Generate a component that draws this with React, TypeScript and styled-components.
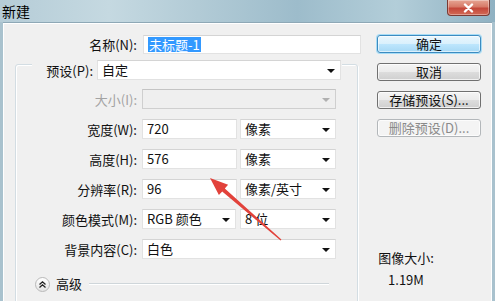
import React from "react";
import styled, { createGlobalStyle } from "styled-components";

const Global = createGlobalStyle`
  html, body { margin: 0; padding: 0; background: #ffffff; }
  body { font-family: "Noto Sans CJK SC", "Noto Sans", sans-serif; }
  * { box-sizing: border-box; }
`;

const FONT = `"Noto Sans CJK SC", "Noto Sans", sans-serif`;

const Window = styled.div`
  position: relative;
  width: 495px;
  height: 301px;
  overflow: hidden;
  display: flex;
  flex-direction: column;
  background: #a9c2ce;
  font-family: ${FONT};
  font-size: 13px;
  color: #111;
`;

const TitleBar = styled.div`
  height: 22px;
  flex: none;
  display: flex;
  align-items: flex-start;
  justify-content: space-between;
  padding: 0 5px 0 2px;
  background: linear-gradient(
    to right,
    #b5ccd7 0%,
    #c5d9e1 22%,
    #b2cbd6 40%,
    #9dbccb 60%,
    #b3ced9 80%,
    #8fb1c2 100%
  );
`;

const Title = styled.span`
  font-size: 14px;
  line-height: 22px;
  color: #000;
`;

const CloseButton = styled.div`
  width: 43px;
  height: 16px;
  display: flex;
  align-items: center;
  justify-content: center;
  border: 1px solid #7a3a33;
  border-top: none;
  border-radius: 0 0 4px 4px;
  background: linear-gradient(#e6a594 0%, #d77a68 45%, #c4473a 55%, #d26a55 100%);
  box-shadow: inset 0 0 0 1px rgba(255, 255, 255, 0.35);
`;

const Body = styled.div`
  flex: 1;
  display: flex;
  margin: 0 3px;
  background: #f0f0f0;
  border-top: 1px solid #8ea8b6;
  box-shadow: inset 1px 1px 0 #ffffff, inset -1px 0 0 #ffffff;
`;

const Main = styled.div`
  width: 362px;
  flex: none;
  display: flex;
  flex-direction: column;
`;

const NameRow = styled.div`
  margin-top: 12px;
  height: 19px;
  display: flex;
  align-items: center;
`;

const Label = styled.span<{ $w: number; $gap: number; $disabled?: boolean }>`
  width: ${(p) => p.$w}px;
  margin-right: ${(p) => p.$gap}px;
  flex: none;
  text-align: right;
  font-size: 13px;
  line-height: 19px;
  white-space: nowrap;
  color: ${(p) => (p.$disabled ? "#a3a3a3" : "#111")};
`;

const Field = styled.div<{ $w: number; $h?: number; $disabled?: boolean }>`
  width: ${(p) => p.$w}px;
  height: ${(p) => p.$h ?? 20}px;
  flex: none;
  display: flex;
  align-items: center;
  justify-content: space-between;
  padding: 0 5px 0 4px;
  background: ${(p) => (p.$disabled ? "#efefef" : "#ffffff")};
  border: 1px solid ${(p) => (p.$disabled ? "#cfcfcf" : "#e2e2e2")};
  border-top-color: ${(p) => (p.$disabled ? "#c4c4c4" : "#d4d4d4")};
  font-size: 13px;
  line-height: 18px;
  color: #111;
  white-space: nowrap;
`;

const Selected = styled.span`
  background: #3399ff;
  color: #ffffff;
  padding: 0 1px;
  line-height: 15px;
`;

const Caret = styled.span<{ $disabled?: boolean }>`
  width: 0;
  height: 0;
  border-left: 4px solid transparent;
  border-right: 4px solid transparent;
  border-top: 4px solid ${(p) => (p.$disabled ? "#b0b0b0" : "#111")};
  margin-top: 1px;
`;

const GroupBox = styled.div`
  margin: 10px 0 0 12px;
  width: 343px;
  height: 280px;
  flex: none;
  border: 1px solid #d3dde3;
  border-radius: 3px;
  box-shadow: inset 1px 1px 0 #ffffff, 1px 1px 0 #ffffff;
  display: flex;
  flex-direction: column;
`;

const PresetRow = styled.div`
  margin: -5px 0 0 16px;
  width: 310px;
  height: 20px;
  display: flex;
  align-items: center;
  background: #f0f0f0;
`;

const Rows = styled.div`
  margin-top: 9px;
  display: grid;
  grid-auto-rows: 20px;
  row-gap: 10px;
`;

const Row = styled.div`
  display: flex;
  align-items: center;
`;

const Spacer = styled.span<{ $w: number }>`
  width: ${(p) => p.$w}px;
  flex: none;
`;

const Advanced = styled.div`
  margin: 17px 0 0 19px;
  height: 16px;
  display: flex;
  align-items: center;
`;

const RoundButton = styled.span`
  width: 15px;
  height: 15px;
  border-radius: 50%;
  border: 1px solid #b9b9b9;
  background: linear-gradient(#ffffff, #e4e4e4);
  display: flex;
  align-items: center;
  justify-content: center;
  margin-right: 6px;
`;

const AdvText = styled.span`
  font-size: 13px;
  line-height: 16px;
  margin-right: 7px;
`;

const Rule = styled.span`
  width: 240px;
  height: 2px;
  border-top: 1px solid #cfd6da;
  border-bottom: 1px solid #ffffff;
`;

const Side = styled.div`
  flex: 1;
  display: flex;
  flex-direction: column;
  padding: 12px 0 0 12px;
  gap: 10px;
`;

const Button = styled.div<{ $variant?: "primary" | "disabled" }>`
  width: 104px;
  height: 18px;
  display: flex;
  align-items: center;
  justify-content: center;
  border-radius: 3px;
  font-size: 13px;
  line-height: 16px;
  white-space: nowrap;
  border: 1px solid
    ${(p) => (p.$variant === "primary" ? "#3c8bc0" : p.$variant === "disabled" ? "#b3b7ba" : "#707070")};
  color: ${(p) => (p.$variant === "disabled" ? "#8a8a8a" : "#111")};
  background: ${(p) =>
    p.$variant === "primary"
      ? "linear-gradient(#eaf6fd 0%, #d9f0fc 50%, #bee6fd 50%, #a7d9f5 100%)"
      : p.$variant === "disabled"
      ? "#f4f4f4"
      : "linear-gradient(#f4f4f4 0%, #ebebeb 50%, #dddddd 50%, #cfcfcf 100%)"};
  box-shadow: ${(p) =>
    p.$variant === "primary"
      ? "0 0 0 1px #a6dcf6, inset 0 0 0 1px rgba(255,255,255,0.6)"
      : "inset 0 0 0 1px rgba(255,255,255,0.7)"};
`;

const ImageSize = styled.div`
  margin: 100px 0 0 0;
  width: 58px;
  text-align: center;
  font-size: 13px;
  line-height: 22px;
  color: #111;
`;

const ArrowLayer = styled.svg`
  position: absolute;
  left: 0;
  top: 0;
  pointer-events: none;
`;

export default function App() {
  return (
    <>
      <Global />
      <Window>
        <TitleBar>
          <Title>新建</Title>
          <CloseButton>
            <svg width="11" height="10" viewBox="0 0 11 10">
              <path d="M2 1.5 L9 8.5 M9 1.5 L2 8.5" stroke="#ffffff" strokeWidth="2.4" strokeLinecap="round" />
            </svg>
          </CloseButton>
        </TitleBar>
        <Body>
          <Main>
            <NameRow>
              <Label $w={134} $gap={6}>名称(N):</Label>
              <Field $w={218} $h={19}>
                <Selected>未标题-1</Selected>
              </Field>
            </NameRow>
            <GroupBox>
              <PresetRow>
                <Label $w={61} $gap={4}>预设(P):</Label>
                <Field $w={244}>
                  <span>自定</span>
                  <Caret />
                </Field>
              </PresetRow>
              <Rows>
                <Row>
                  <Label $w={121} $gap={5} $disabled>大小(I):</Label>
                  <Field $w={194} $disabled>
                    <span />
                    <Caret $disabled />
                  </Field>
                </Row>
                <Row>
                  <Label $w={121} $gap={5}>宽度(W):</Label>
                  <Field $w={95}>720</Field>
                  <Spacer $w={3} />
                  <Field $w={96}>
                    <span>像素</span>
                    <Caret />
                  </Field>
                </Row>
                <Row>
                  <Label $w={121} $gap={5}>高度(H):</Label>
                  <Field $w={95}>576</Field>
                  <Spacer $w={3} />
                  <Field $w={96}>
                    <span>像素</span>
                    <Caret />
                  </Field>
                </Row>
                <Row>
                  <Label $w={121} $gap={5}>分辨率(R):</Label>
                  <Field $w={95}>96</Field>
                  <Spacer $w={3} />
                  <Field $w={96}>
                    <span>像素/英寸</span>
                    <Caret />
                  </Field>
                </Row>
                <Row>
                  <Label $w={121} $gap={5}>颜色模式(M):</Label>
                  <Field $w={94}>
                    <span>RGB 颜色</span>
                    <Caret />
                  </Field>
                  <Spacer $w={4} />
                  <Field $w={96}>
                    <span>8 位</span>
                    <Caret />
                  </Field>
                </Row>
                <Row>
                  <Label $w={121} $gap={5}>背景内容(C):</Label>
                  <Field $w={194}>
                    <span>白色</span>
                    <Caret />
                  </Field>
                </Row>
              </Rows>
              <Advanced>
                <RoundButton>
                  <svg width="9" height="9" viewBox="0 0 9 9">
                    <path d="M1.5 4.5 L4.5 1.8 L7.5 4.5 M1.5 7.5 L4.5 4.8 L7.5 7.5" fill="none" stroke="#222" strokeWidth="1.3" />
                  </svg>
                </RoundButton>
                <AdvText>高级</AdvText>
                <Rule />
              </Advanced>
            </GroupBox>
          </Main>
          <Side>
            <Button $variant="primary">确定</Button>
            <Button>取消</Button>
            <Button>存储预设(S)...</Button>
            <Button $variant="disabled">删除预设(D)...</Button>
            <ImageSize>
              图像大小:
              <br />
              1.19M
            </ImageSize>
          </Side>
        </Body>
        <ArrowLayer width="495" height="301" viewBox="0 0 495 301">
          <polygon
            points="210,178 228.1,184.7 224.8,188.4 281.4,239.55 280.6,240.45 222.2,191.4 218.9,195.1"
            fill="#e2423b"
          />
        </ArrowLayer>
      </Window>
    </>
  );
}
